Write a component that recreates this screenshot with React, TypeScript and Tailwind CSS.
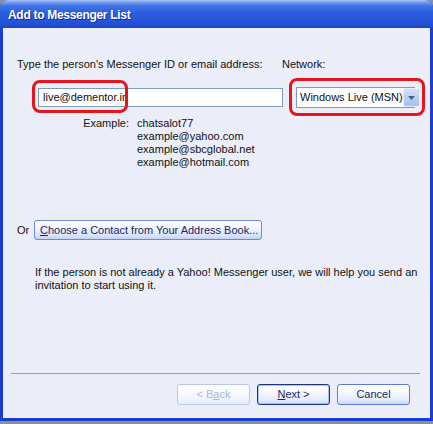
import React from "react";

const font = { fontFamily: '"Liberation Sans", Arial, sans-serif' };

function XPButton({
  children,
  width,
  variant = "normal",
}: {
  children: React.ReactNode;
  width: number;
  variant?: "normal" | "default" | "disabled";
}) {
  const base =
    "h-[21px] rounded-[3px] border flex items-center justify-center text-[11px] leading-[13px] shrink-0";
  const cls =
    variant === "default"
      ? "border-[#1c3584] bg-[linear-gradient(to_bottom,#ffffff_0%,#f4f7fe_45%,#dfe7fa_85%,#c9d6f6_100%)] text-[#1a2766] shadow-[inset_0_0_0_1px_#a8c0f2]"
      : variant === "disabled"
      ? "border-[#b9c8ea] bg-[linear-gradient(to_bottom,#ffffff_0%,#f3f6fd_60%,#e6ecfa_100%)] text-[#a7b6dc]"
      : "border-[#5b7bd6] bg-[linear-gradient(to_bottom,#ffffff_0%,#f4f7fe_45%,#dfe7fa_85%,#c6d4f5_100%)] text-[#1a2766]";
  return (
    <div className={`${base} ${cls}`} style={{ width }}>
      {children}
    </div>
  );
}

export default function App() {
  return (
    <div className="w-[433px] h-[424px] bg-[#8e8e96] overflow-hidden" style={font}>
      <div className="w-[433px] h-[421px] flex flex-col rounded-t-[8px] overflow-hidden bg-[#1f47c8]">
        {/* Title bar */}
        <div className="h-[28px] shrink-0 flex items-center pl-[8px] bg-[linear-gradient(to_bottom,#a9c3f6_0%,#6c96f0_10%,#3f72e6_22%,#2c5fe0_45%,#2755d9_70%,#2250d4_88%,#1b44c2_100%)]">
          <span className="text-white font-bold text-[12px] tracking-[-0.3px] leading-[14px] [text-shadow:1px_1px_0_#12308f] mt-[1px]">
            Add to Messenger List
          </span>
        </div>
        {/* Body */}
        <div className="flex-1 flex flex-col border-l-[3px] border-r-[3px] border-b-[3px] border-l-[#1b3ed0] border-r-[#1b3ed0] border-b-[#1b3ed0] bg-[#ebeef8] relative text-[11px] leading-[13px] text-[#111111]">
          {/* labels */}
          <div className="flex mt-[30px] h-[13px]">
            <div className="w-[279px] pl-[14px] shrink-0 whitespace-nowrap">
              Type the person's Messenger ID or email address:
            </div>
            <div className="whitespace-nowrap">Network:</div>
          </div>
          {/* inputs */}
          <div className="flex mt-[16px] h-[21px] items-start">
            <div className="w-[293px] shrink-0 pl-[35px]">
              <div className="relative mt-[1px] w-[245px] h-[19px] bg-white border border-[#7f9db9] flex items-center pl-[4px]">
                <span className="text-[#111]">live@dementor.ir</span>
                <div className="absolute left-[-7px] top-[-9px] w-[96px] h-[33px] border-[3px] border-[#e8141b] rounded-[8px]" />
              </div>
            </div>
            <div className="relative w-[119px] h-[21px] bg-white border border-[#7f9db9] flex items-center">
              <span className="pl-[3px] whitespace-nowrap flex-1">Windows Live (MSN)</span>
              <div className="w-[17px] h-[19px] shrink-0 rounded-[2px] border border-[#e6eefc] bg-[linear-gradient(to_bottom,#d2e0fc_0%,#b6cbf7_60%,#a5bff4_100%)] flex items-center justify-center">
                <svg width="7" height="4" viewBox="0 0 7 4">
                  <path d="M0 0 H7 L3.5 4 Z" fill="#4d6185" />
                </svg>
              </div>
              <div className="absolute left-[-8px] top-[-10px] w-[136px] h-[38px] border-[3px] border-[#e8141b] rounded-[8px]" />
            </div>
          </div>
          {/* examples */}
          <div className="flex mt-[9px]">
            <div className="w-[126px] shrink-0 text-right pr-[0px]">Example:</div>
            <div className="pl-[8px] flex flex-col">
              <span>chatsalot77</span>
              <span>example@yahoo.com</span>
              <span>example@sbcglobal.net</span>
              <span>example@hotmail.com</span>
            </div>
          </div>
          {/* Or row */}
          <div className="flex items-center mt-[51px] h-[20px] pl-[14px]">
            <span className="w-[17px]">Or</span>
            <div className="h-[20px] w-[228px] rounded-[3px] border border-[#6a8ad8] bg-[linear-gradient(to_bottom,#ffffff_0%,#f0f4fd_40%,#d9e3f9_80%,#c3d3f5_100%)] text-[#1a2766] flex items-center pl-[5px] whitespace-nowrap">
              <span>
                <span className="underline">C</span>hoose a Contact from Your Address Book...
              </span>
            </div>
          </div>
          {/* paragraph */}
          <div className="mt-[26px] pl-[32px] pr-[10px]">
            <div className="whitespace-nowrap">
              If the person is not already a Yahoo! Messenger user, we will help you send an
            </div>
            <div>invitation to start using it.</div>
          </div>
          {/* bottom */}
          <div className="mt-auto">
            <div className="ml-[8px] w-[409px] h-px bg-[#8d9ccc]" />
            <div className="flex justify-end gap-[7px] mt-[10px] pr-[20px] mb-[13px]">
              <XPButton width={73} variant="disabled">
                <span>
                  &lt; B<span className="underline">a</span>ck
                </span>
              </XPButton>
              <XPButton width={73} variant="default">
                <span>
                  <span className="underline">N</span>ext &gt;
                </span>
              </XPButton>
              <XPButton width={73}>Cancel</XPButton>
            </div>
          </div>
        </div>
      </div>
    </div>
  );
}
